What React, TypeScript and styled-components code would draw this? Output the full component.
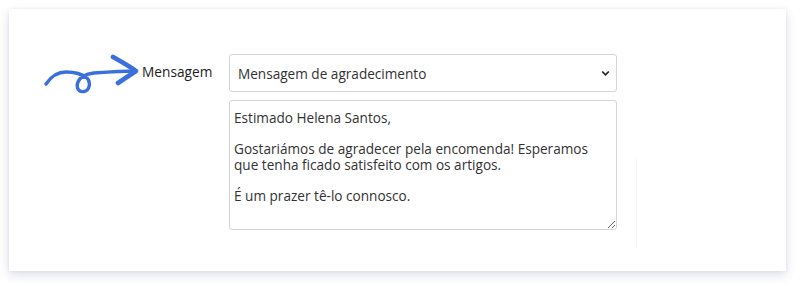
import React from "react";
import styled, { createGlobalStyle } from "styled-components";

const Global = createGlobalStyle`
  html, body { margin: 0; padding: 0; background: #ffffff; }
  body { font-family: "Open Sans", "Liberation Sans", sans-serif; color: #333; }
  * { box-sizing: border-box; }
`;

const Page = styled.div`
  padding: 9px 14px 15px 9px;
`;

const Card = styled.div`
  height: 262px;
  background: #ffffff;
  box-shadow: 0 4px 10px rgba(50, 65, 130, 0.16), 0 0 4px rgba(0, 0, 0, 0.06);
  padding: 45px 0 0 35px;
  display: flex;
  align-items: flex-start;
`;

const LabelArea = styled.div`
  width: 185px;
  display: flex;
  align-items: flex-start;
`;

const ArrowSvg = styled.svg`
  width: 96px;
  height: 40px;
  flex: none;
`;

const Label = styled.label`
  margin: 8px 0 0 2px;
  font-size: 13.7px;
  line-height: 19px;
  color: #1c1c1c;
`;

const Fields = styled.div`
  width: 388px;
  display: flex;
  flex-direction: column;
  gap: 8px;
`;

const SelectWrap = styled.div`
  position: relative;
  height: 38px;
`;

const Select = styled.select`
  appearance: none;
  -webkit-appearance: none;
  width: 100%;
  height: 38px;
  border: 1px solid #d4d4d4;
  border-radius: 3px;
  background: #fff;
  padding: 0 30px 0 8px;
  font-family: "Open Sans", "Liberation Sans", sans-serif;
  font-size: 13.6px;
  color: #333;
  outline: none;
`;

const Chevron = styled.svg`
  position: absolute;
  right: 7px;
  top: 16px;
  width: 9px;
  height: 7px;
  pointer-events: none;
`;

const TextArea = styled.textarea`
  width: 100%;
  height: 130px;
  border: 1px solid #d4d4d4;
  border-radius: 3px;
  padding: 9px 4px;
  font-family: "Open Sans", "Liberation Sans", sans-serif;
  font-size: 13.6px;
  line-height: 15.5px;
  color: #333;
  resize: both;
  outline: none;
`;

const Divider = styled.div`
  margin: 104px 0 0 19px;
  width: 1px;
  height: 88px;
  background: #f4f4f4;
`;

const message = `Estimado Helena Santos,

Gostariámos de agradecer pela encomenda! Esperamos que tenha ficado satisfeito com os artigos.

É um prazer tê-lo connosco.`;

export default function App() {
  return (
    <Page>
      <Global />
      <Card>
        <LabelArea>
          <ArrowSvg viewBox="0 0 96 40">
            <path
              d="M2 30 C 8 21, 15 18, 22 18 C 30 18, 38 20, 43 24 C 47 28, 46 36, 40 37.5 C 34 38.5, 32 33, 34 28 C 36 23, 42 20, 50 19 C 64 18, 80 17, 92 17"
              fill="none"
              stroke="#3a6fdc"
              strokeWidth="3.4"
              strokeLinecap="round"
              strokeLinejoin="round"
            />
            <path
              d="M69 3 C 76 7, 85 12, 92 17 C 86 21, 80 25, 74 29"
              fill="none"
              stroke="#3a6fdc"
              strokeWidth="4.6"
              strokeLinecap="round"
              strokeLinejoin="round"
            />
          </ArrowSvg>
          <Label htmlFor="msg-type">Mensagem</Label>
        </LabelArea>
        <Fields>
          <SelectWrap>
            <Select id="msg-type" defaultValue="agradecimento">
              <option value="agradecimento">Mensagem de agradecimento</option>
            </Select>
            <Chevron viewBox="0 0 9 7">
              <path d="M1.2 1.5 L4.5 4.8 L7.8 1.5" fill="none" stroke="#222" strokeWidth="1.7" />
            </Chevron>
          </SelectWrap>
          <TextArea defaultValue={message} spellCheck={false} />
        </Fields>
        <Divider />
      </Card>
    </Page>
  );
}
